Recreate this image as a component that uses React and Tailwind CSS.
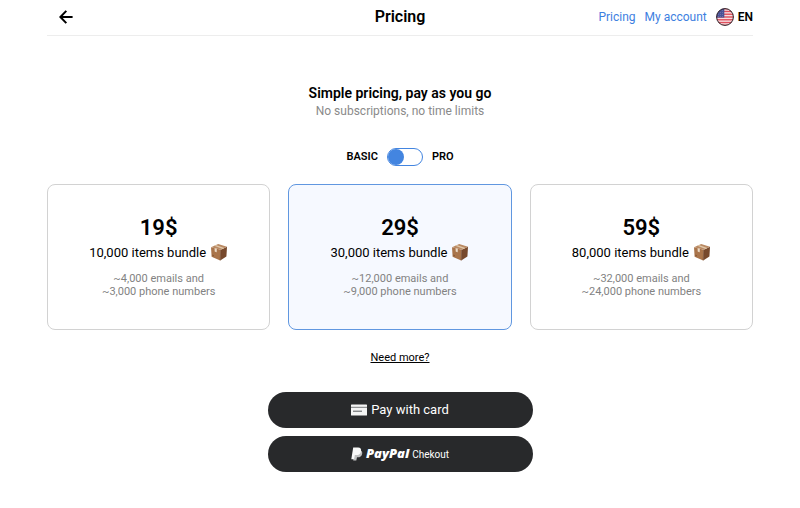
import { useState } from "react";

const bundles = [
  { price: "19$", items: "10,000", emails: "4,000", phones: "3,000" },
  { price: "29$", items: "30,000", emails: "12,000", phones: "9,000" },
  { price: "59$", items: "80,000", emails: "32,000", phones: "24,000" },
];

function BackArrow() {
  return (
    <svg viewBox="0 0 14 14" className="h-3.5 w-3.5" fill="none" stroke="currentColor" strokeWidth="2" aria-hidden="true">
      <path d="M7.3 0.9 1.4 7l5.9 6.1M1.6 7H13.6" />
    </svg>
  );
}

function Flag() {
  const stars = [2.5, 4.5, 6.5, 8.5];
  return (
    <svg viewBox="0 0 18 18" className="h-[18px] w-[18px]" aria-hidden="true">
      <defs>
        <clipPath id="flag-round">
          <circle cx="9" cy="9" r="8.5" />
        </clipPath>
      </defs>
      <g clipPath="url(#flag-round)">
        <rect width="18" height="18" fill="#f5dfe2" />
        {[0, 1, 2, 3, 4, 5, 6].map((i) => (
          <rect key={i} y={i * 2.77} width="18" height="1.39" fill="#e04f5c" />
        ))}
        <rect width="8.3" height="9.6" fill="#4a5296" />
        {stars.map((y) =>
          [2.2, 4.4, 6.6].map((x) => <circle key={`${x}-${y}`} cx={x} cy={y} r="0.35" fill="#c9cce4" />)
        )}
      </g>
      <circle cx="9" cy="9" r="8.4" fill="none" stroke="#2b2228" strokeWidth="1" />
    </svg>
  );
}

function Box() {
  return (
    <svg viewBox="0 0 18 18" className="h-[18px] w-[18px]" aria-hidden="true">
      <path d="M1 3.2 10.8 5.8 10.2 16.4 1.6 12.8Z" fill="#a9744a" />
      <path d="M10.8 5.8 17 2.8 16.4 12.6 10.2 16.4Z" fill="#77492c" />
      <path d="M1 3.2 8.2 0 17 2.8 10.8 5.8Z" fill="#b98962" />
      <path d="M4.2 1.8 5.9 1 14.4 4 12.6 4.9Z" fill="#dfc6a8" />
      <path d="M4.6 4.2 6.8 4.8 6.7 8.4 5.9 7.8 5.4 8.1 4.7 7.5Z" fill="#ecdcc8" />
      <path d="M2.3 10.6 4 11.3V12.5L2.3 11.8Z" fill="#8a5a36" />
      <path d="M10.8 5.8 10.2 16.4" stroke="#693e24" strokeWidth="0.5" />
    </svg>
  );
}

function CardIcon() {
  return (
    <svg viewBox="0 0 16 12" className="h-3 w-4" aria-hidden="true">
      <rect y="0.5" width="16" height="11" rx="0.6" fill="#f4f4f4" />
      <path d="M0 3.3H16" stroke="#77797b" strokeWidth="1" />
      <path d="M2 7.2H11" stroke="#55585a" strokeWidth="1" />
    </svg>
  );
}

function PayPalMark() {
  return (
    <svg viewBox="0 0 12 14" className="h-3.5 w-3" aria-hidden="true">
      <path d="M4 3.5H9.4C11.3 4 11.6 5.7 11 7.5 10.4 9.4 9 10.3 7 10.3H6L5.3 13.4H2.2Z" fill="#bfc0c1" />
      <path d="M2.2 0.6H7C9.6 0.6 10.5 2.2 10 4.4 9.5 6.9 7.9 8.1 5.4 8.1H3.9L3 12.2H0.3Z" fill="#f8f8f8" />
    </svg>
  );
}

function BundleCard({ bundle, selected, onSelect }) {
  const tone = selected ? "border-[#6097e0] bg-[#f6f9ff]" : "border-[#d2d2d2] bg-white";
  return (
    <button
      type="button"
      aria-pressed={selected}
      onClick={onSelect}
      className={`flex flex-1 flex-col items-center rounded-lg border px-4 pt-[30px] pb-[31px] ${tone}`}
    >
      <span className="text-[22px] leading-[26px] font-semibold">{bundle.price}</span>
      <span className="flex items-center gap-1 text-[13px] leading-6">
        {bundle.items} items bundle <Box />
      </span>
      <span className="mt-[7px] text-[11px] leading-[13px] text-[#828282]">
        ~{bundle.emails} emails and
        <br />~{bundle.phones} phone numbers
      </span>
    </button>
  );
}

export default function App() {
  const [selected, setSelected] = useState(1);
  const [pro, setPro] = useState(false);

  return (
    <div className="min-h-screen bg-white px-[47px] font-[Roboto,sans-serif] text-black">
      <header className="grid h-9 grid-cols-[1fr_auto_1fr] items-center border-b border-[#ededed] pb-0.5">
        <button type="button" aria-label="Back" className="ml-3 w-3.5">
          <BackArrow />
        </button>
        <h1 className="text-base font-semibold">Pricing</h1>
        <nav className="flex items-center justify-end gap-[9px] text-xs text-[#3d80df]">
          <a href="#pricing">Pricing</a>
          <a href="#account">My account</a>
          <button type="button" className="flex items-center gap-1 text-xs font-semibold text-black">
            <Flag />
            EN
          </button>
        </nav>
      </header>

      <main className="flex flex-col items-center pt-12">
        <h2 className="text-sm leading-[18px] font-semibold">Simple pricing, pay as you go</h2>
        <p className="text-xs leading-[18px] text-[#8a8a8a]">No subscriptions, no time limits</p>

        <label className="mt-7 flex items-center gap-[9px] text-[11px] leading-[18px] font-semibold">
          <span>BASIC</span>
          <input
            type="checkbox"
            role="switch"
            aria-label="Pro plan"
            checked={pro}
            onChange={(e) => setPro(e.target.checked)}
            className="h-[18px] w-9 appearance-none rounded-full border border-[#4385e0] bg-white before:block before:h-4 before:w-4 before:rounded-full before:bg-[#4385e0] checked:before:ml-auto"
          />
          <span>PRO</span>
        </label>

        <section aria-label="Bundles" className="mt-[18px] flex w-full gap-[18px]">
          {bundles.map((bundle, i) => (
            <BundleCard key={bundle.price} bundle={bundle} selected={selected === i} onSelect={() => setSelected(i)} />
          ))}
        </section>

        <a href="#more" className="mt-5 text-[11px] leading-4 underline">
          Need more?
        </a>

        <div className="mt-[26px] flex w-[265px] flex-col gap-2 text-white">
          <button type="button" className="flex h-9 items-center justify-center gap-1 rounded-full bg-[#28292b] text-[13px]">
            <CardIcon />
            Pay with card
          </button>
          <button type="button" className="flex h-9 items-center justify-center gap-[3px] rounded-full bg-[#28292b] text-[10px]">
            <PayPalMark />
            <span className="font-['Open_Sans',sans-serif] text-[13px] font-extrabold italic">PayPal</span>
            Chekout
          </button>
        </div>
      </main>
    </div>
  );
}
